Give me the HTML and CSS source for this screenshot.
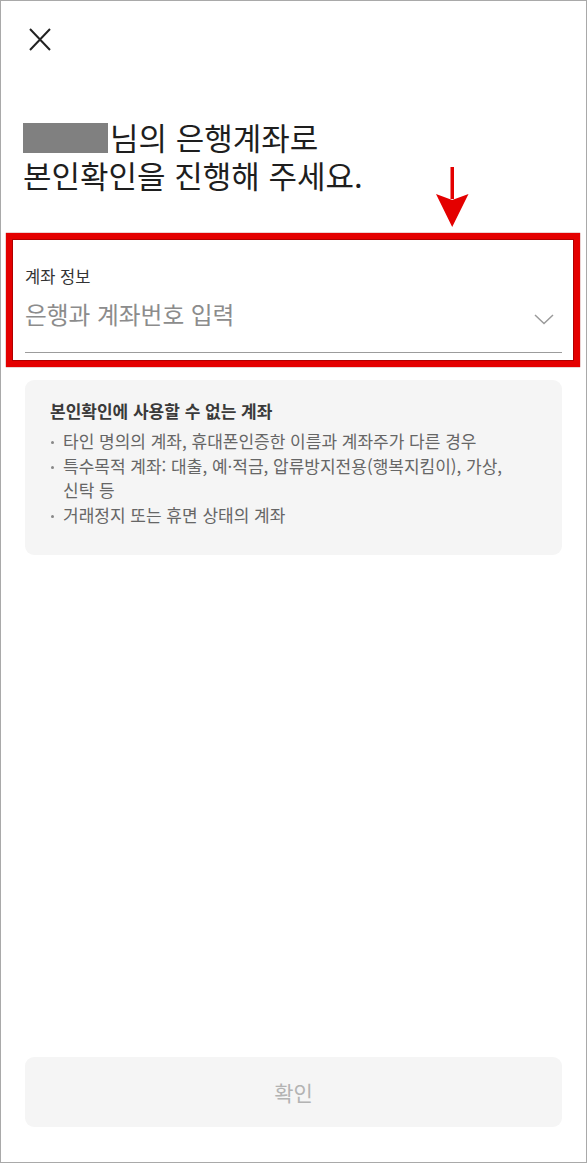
FILE: index.html
```html
<!DOCTYPE html>
<html lang="ko">
<head>
    <meta charset="UTF-8">
    <meta name="viewport" content="width=device-width, initial-scale=1.0">
    <title>계좌 본인확인</title>
    <link rel="stylesheet" href="styles.css">
</head>
<body>
    <div class="screen">
        <div class="header">
            <svg class="close-icon" width="22" height="23" viewBox="0 0 22 23">
                <path d="M1 1 L21 22 M21 1 L1 22" stroke="#222" stroke-width="2" fill="none"/>
            </svg>
        </div>

        <h1 class="title">
            <span class="title-line"><span class="masked"></span>님의 은행계좌로</span>
            <span class="title-line">본인확인을 진행해 주세요.</span>
        </h1>

        <svg class="mark-arrow" width="33" height="61" viewBox="0 0 33 61">
            <rect x="14.5" y="0" width="3.5" height="32" fill="#e40000"/>
            <path d="M0 27 L16.2 33 L32.5 27 L16.2 60 Z" fill="#e40000"/>
        </svg>

        <div class="mark-box">
            <div class="field">
                <label class="field-label">계좌 정보</label>
                <div class="field-row">
                    <span class="placeholder">은행과 계좌번호 입력</span>
                    <svg class="chevron" width="20" height="11" viewBox="0 0 20 11">
                        <path d="M1 1 L10 9.5 L19 1" stroke="#9a9a9a" stroke-width="1.5" fill="none"/>
                    </svg>
                </div>
            </div>
        </div>

        <div class="notice">
            <p class="notice-title">본인확인에 사용할 수 없는 계좌</p>
            <ul class="notice-list">
                <li>타인 명의의 계좌, 휴대폰인증한 이름과 계좌주가 다른 경우</li>
                <li>특수목적 계좌: 대출, 예·적금, 압류방지전용(행복지킴이), 가상, 신탁 등</li>
                <li>거래정지 또는 휴면 상태의 계좌</li>
            </ul>
        </div>

        <button class="confirm-btn" disabled>확인</button>
    </div>
</body>
</html>
```

FILE: styles.css
```css
body {
    margin: 0;
    font-family: "Noto Sans CJK KR", "Noto Sans", sans-serif;
    background-color: #fff;
}
.screen {
    position: relative;
    width: 587px;
    height: 1163px;
    box-sizing: border-box;
    border: 1px solid #a9a9a9;
    padding: 0 24px 35px;
    display: flex;
    flex-direction: column;
}
.header {
    padding-top: 27px;
    display: flex;
}
.close-icon {
    margin-left: 4px;
}
.title {
    margin: 67px 0 0 -2px;
    font-size: 31px;
    font-weight: 400;
    color: #1e1e1e;
}
.title-line {
    display: flex;
    align-items: center;
    height: 38px;
    line-height: 38px;
}
.masked {
    display: inline-block;
    width: 85px;
    height: 30px;
    margin: 2px 2px 0 0;
    background-color: #808080;
}
.mark-arrow {
    position: absolute;
    left: 435px;
    top: 166px;
}
.mark-box {
    margin: 39px -18px 0 -19px;
    border: 6px solid #e40000;
    box-shadow: 0 0 0 1px #b00000 inset, 0 0 1px #900000;
    padding: 27px 12px 8px 13px;
}
.field-label {
    display: block;
    font-size: 16.5px;
    line-height: 20px;
    color: #333;
}
.field-row {
    margin-top: 13px;
    display: flex;
    justify-content: space-between;
    align-items: flex-start;
    padding-bottom: 23px;
    border-bottom: 1px solid #9c9c9c;
}
.placeholder {
    font-size: 23.7px;
    line-height: 30px;
    color: #8c8c8c;
}
.chevron {
    margin: 15px 8px 0 0;
}
.notice {
    margin-top: 13px;
    background-color: #f5f5f5;
    border-radius: 9px;
    padding: 20px 35px 28px 25px;
}
.notice-title {
    margin: 0;
    font-size: 17px;
    font-weight: 700;
    line-height: 22px;
    color: #3a3a3a;
}
.notice-list {
    list-style: none;
    margin: 7px 0 0;
    padding: 0;
}
.notice-list li {
    position: relative;
    padding-left: 13px;
    font-size: 17px;
    line-height: 24.5px;
    color: #666;
    word-break: keep-all;
}
.notice-list li::before {
    content: "";
    position: absolute;
    left: 1px;
    top: 12px;
    width: 3px;
    height: 3px;
    border-radius: 50%;
    background-color: #888;
}
.confirm-btn {
    margin-top: auto;
    height: 70px;
    border: none;
    border-radius: 9px;
    background-color: #f5f5f5;
    font-family: inherit;
    font-size: 21px;
    color: #b3b3b3;
}
```
